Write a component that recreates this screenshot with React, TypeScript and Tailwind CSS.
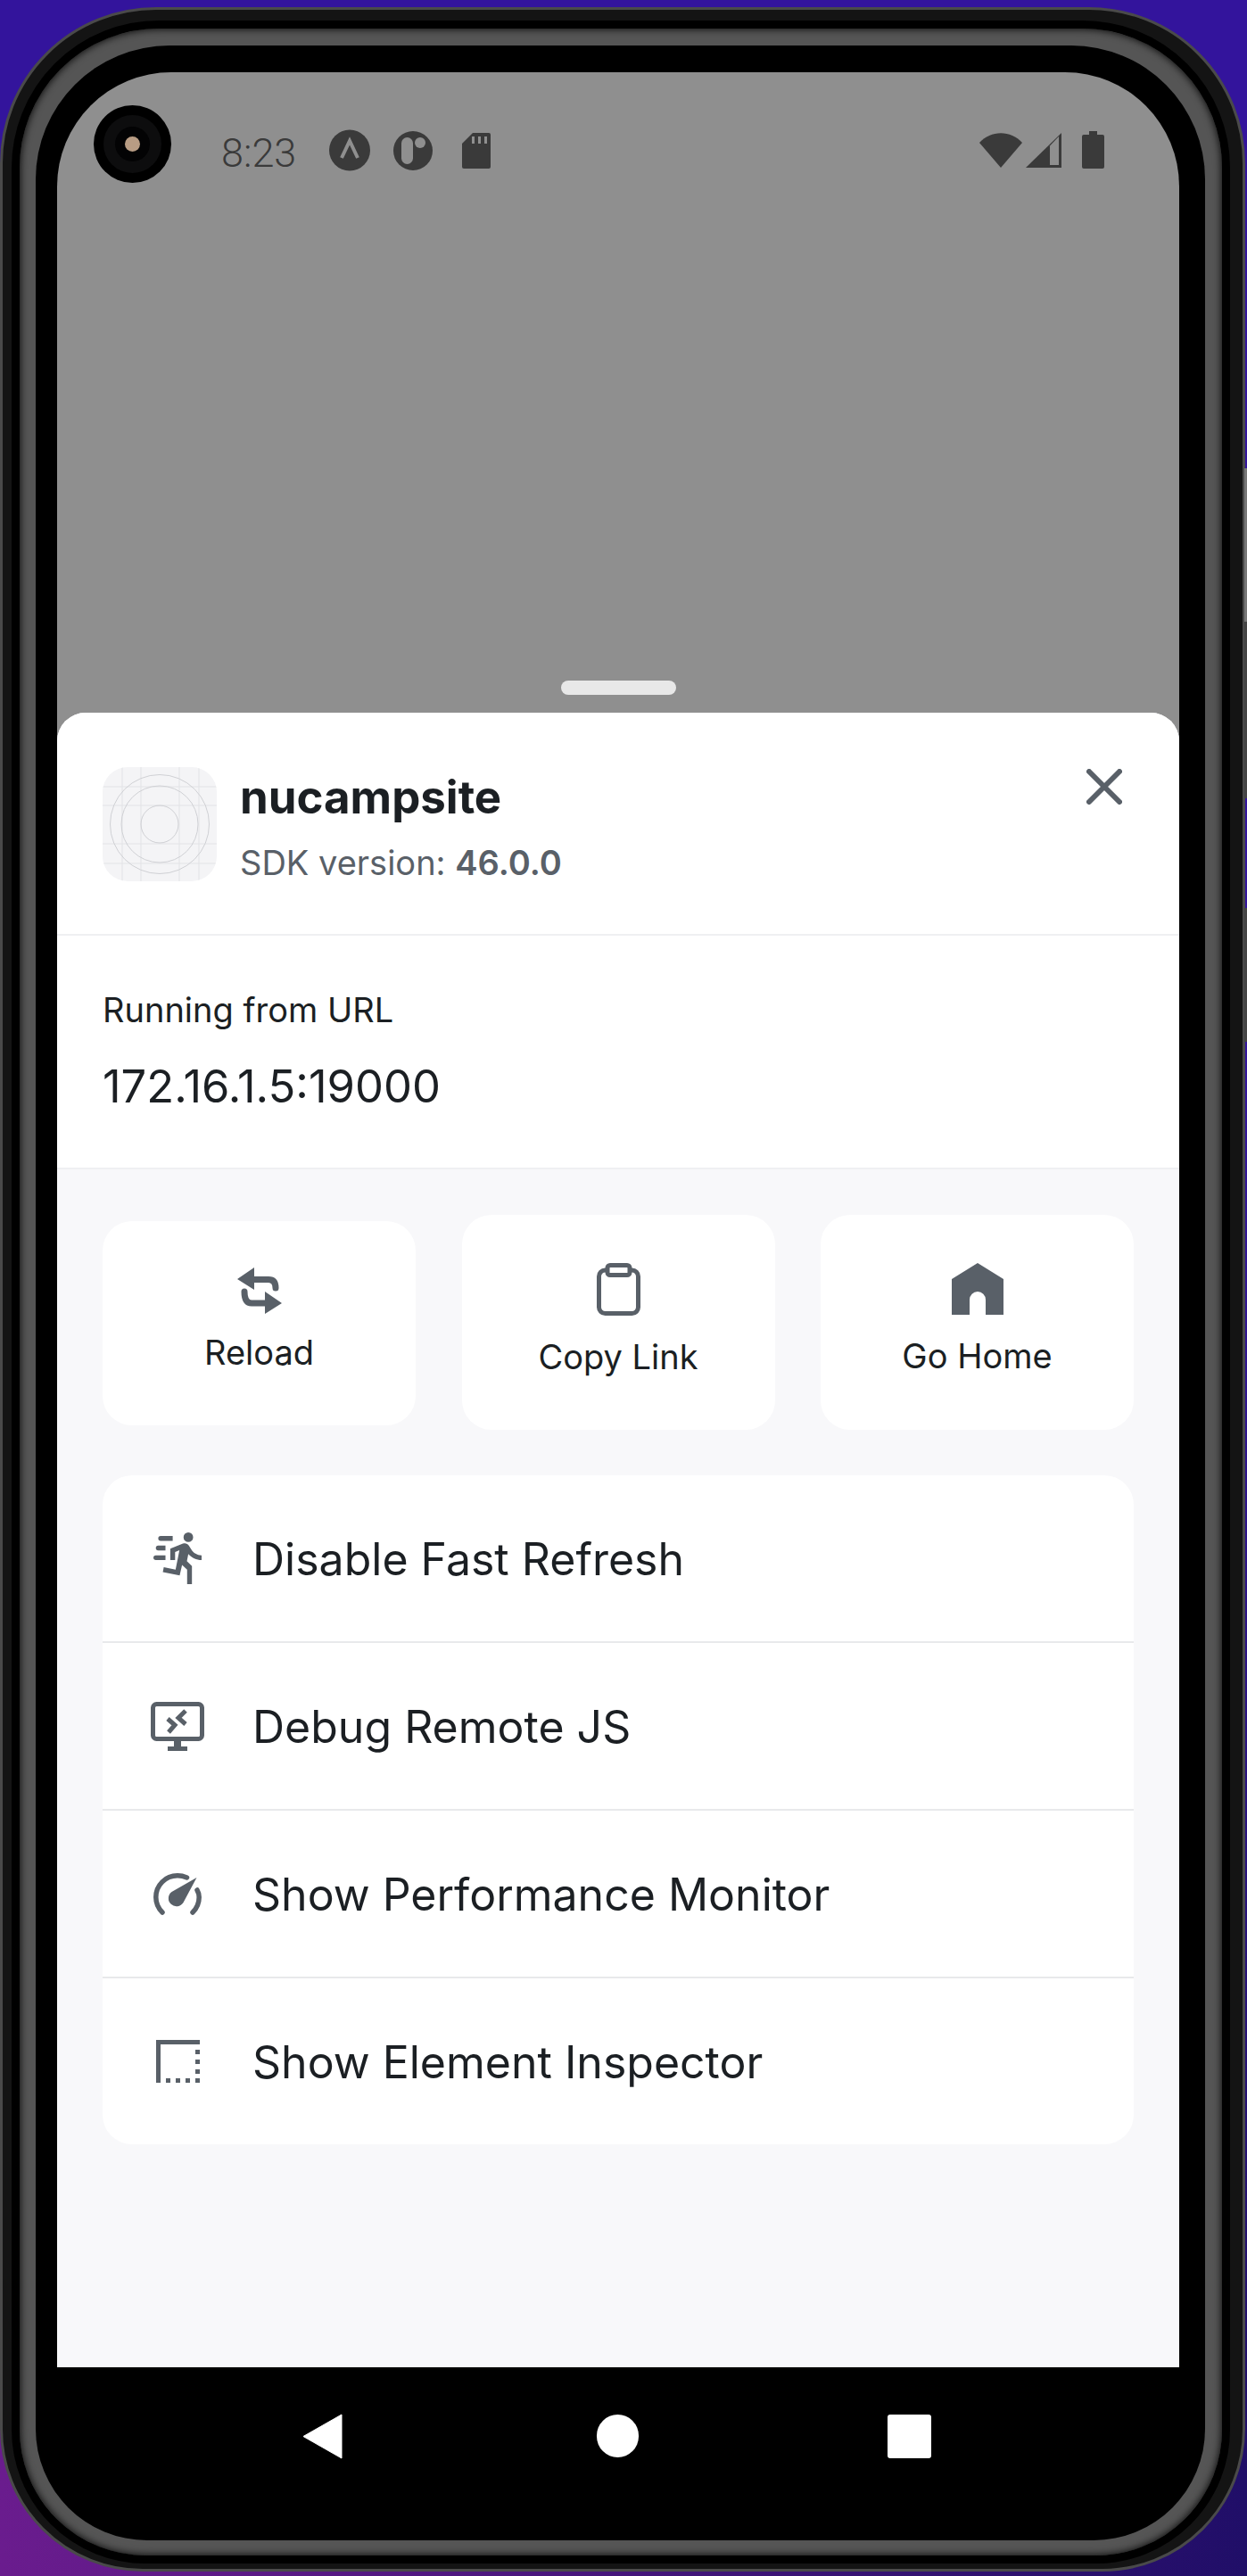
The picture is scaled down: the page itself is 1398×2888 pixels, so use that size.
import type { FC, ReactNode } from "react";

const iconColor = "#596068";

const RunFast: FC = () => (
  <svg viewBox="2 1.5 20 21.5" className="h-[58px] w-[54px]" fill={iconColor}>
    <path d="M16.5,5.5A2,2 0 0,0 18.5,3.5A2,2 0 0,0 16.5,1.5A2,2 0 0,0 14.5,3.5A2,2 0 0,0 16.5,5.5M12.9,19.4L13.9,15L16,17V23H18V15.5L15.9,13.5L16.5,10.5C17.89,12.09 19.89,13 22,13V11C20.24,11.03 18.6,10.09 17.7,8.55L16.7,6.95C16.35,6.35 15.7,6 15,6C14.75,6 14.5,6.07 14.25,6.15L9,8.3V13H11V9.65L12.8,8.95L11.2,17L6.3,16L5.9,18L12.9,19.4M4,9A1,1 0 0,1 3,8A1,1 0 0,1 4,7H7V9H4M5,5A1,1 0 0,1 4,4A1,1 0 0,1 5,3H10V5H5M3,13A1,1 0 0,1 2,12A1,1 0 0,1 3,11H7V13H3Z" />
  </svg>
);

const RemoteDesktop: FC = () => (
  <svg viewBox="0 0 60 55" className="h-[55px] w-[60px]" fill="none">
    <rect x="2.500" y="2.500" width="55" height="39" rx="4" stroke={iconColor} strokeWidth="5" />
    <path d="M26 43h8v8h-8zM19 50h22v5H19z" fill={iconColor} />
    <path d="M39 10L31 18L39 25M19 19L27 26L20 34" stroke={iconColor} strokeWidth="5" />
  </svg>
);

const Gauge: FC = () => (
  <svg viewBox="0 0 54 47" className="h-[47px] w-[54px]" fill="none">
    <path d="M10 44C5.500 39.500 2.800 33.500 2.800 27C2.800 13.500 13.500 2.800 27 2.800C30.500 2.800 34 3.500 37.500 5" stroke={iconColor} strokeWidth="5.500" strokeLinecap="round" />
    <path d="M44 44C48.500 39.500 51.200 33.500 51.200 27C51.200 24.500 50.500 21.500 49 19" stroke={iconColor} strokeWidth="5.500" strokeLinecap="round" />
    <path d="M48.500 5L33.500 33A9 9 0 1 1 20.500 21Z" fill={iconColor} />
  </svg>
);

const InspectorBox: FC = () => (
  <svg viewBox="0 0 49 48" className="h-[48px] w-[49px]" fill={iconColor}>
    <path d="M0 0H49V5H5V48H0Z" />
    <rect x="44" y="11" width="5" height="5" />
    <rect x="44" y="22" width="5" height="5" />
    <rect x="44" y="33" width="5" height="5" />
    <rect x="44" y="43" width="5" height="5" />
    <rect x="11" y="43" width="5" height="5" />
    <rect x="22" y="43" width="5" height="5" />
    <rect x="33" y="43" width="5" height="5" />
  </svg>
);

const rows = [
  { label: "Disable Fast Refresh", icon: <RunFast /> },
  { label: "Debug Remote JS", icon: <RemoteDesktop /> },
  { label: "Show Performance Monitor", icon: <Gauge /> },
  { label: "Show Element Inspector", icon: <InspectorBox /> },
];

const AppIcon: FC = () => (
  <svg viewBox="0 0 128 128" className="h-[128px] w-[128px] rounded-[28px] bg-[#f4f4f6]" fill="none" strokeWidth="1">
    <path d="M22 0V128M43 0V128M86 0V128M108 0V128M0 22H128M0 43H128M0 86H128M0 108H128" stroke="#e2e3e6" />
    <circle cx="64" cy="64" r="55.500" stroke="#cfd0d4" />
    <circle cx="64" cy="64" r="43" stroke="#cfd0d4" />
    <circle cx="64" cy="64" r="21" stroke="#cfd0d4" />
  </svg>
);

const ActionButton: FC<{ label: string; small?: boolean; icon: ReactNode }> = ({ label, small, icon }) => (
  <div
    className={
      small
        ? "flex h-[229px] w-[351px] flex-col items-center rounded-[33px] bg-white pt-[52px]"
        : "flex h-[241px] w-[351px] flex-col items-center rounded-[33px] bg-white pt-[54px]"
    }
  >
    {icon}
    <span className={small ? "mt-[19px] text-[38px] leading-[48px] text-[#1b1f23]" : "mt-[22px] text-[38px] leading-[48px] text-[#1b1f23]"}>
      {label}
    </span>
  </div>
);

const StatusBar: FC = () => (
  <div className="flex h-[124px] items-start pl-[41px] pr-[84px] pt-[37px]">
    <div className="relative h-[87px] w-[87px] rounded-full bg-black">
      <div className="absolute inset-[11px] rounded-full bg-[#0d0d0e]" />
      <div className="absolute inset-[24px] rounded-full bg-[#030304]" />
      <div className="absolute left-[35px] top-[35px] h-[17px] w-[17px] rounded-full bg-[#b89c84]" />
    </div>
    <span className="ml-[56px] mt-[28px] text-[45px] font-light leading-[52px] text-[#3a3a3a] font-['Roboto',sans-serif]">8:23</span>
    <svg viewBox="0 0 46 47" className="ml-[37px] mt-[27px] h-[47px] w-[46px]">
      <circle cx="23" cy="23.500" r="23" fill="#3a3a3a" />
      <path d="M14 32L23 13L32 32" fill="none" stroke="#8f8f8f" strokeWidth="4" />
    </svg>
    <svg viewBox="0 0 44 44" className="ml-[26px] mt-[29px] h-[44px] w-[44px]">
      <circle cx="22" cy="22" r="22" fill="#3a3a3a" />
      <rect x="9" y="7" width="13" height="30" rx="6.500" fill="#8f8f8f" />
      <circle cx="30" cy="13" r="6" fill="#8f8f8f" />
    </svg>
    <svg viewBox="0 0 32 40" className="ml-[33px] mt-[31px] h-[40px] w-[32px]">
      <path d="M12 0H30A2 2 0 0 1 32 2V38A2 2 0 0 1 30 40H2A2 2 0 0 1 0 38V12Z" fill="#3a3a3a" />
      <path d="M11 4h3v8h-3zM18 4h3v8h-3zM25 4h3v8h-3z" fill="#8f8f8f" />
    </svg>
    <div className="flex-1" />
    <svg viewBox="0 0 48 39" className="mt-[31px] h-[39px] w-[48px]">
      <path d="M0 11C13 -3.500 35 -3.500 48 11L24 39Z" fill="#3a3a3a" />
    </svg>
    <svg viewBox="0 0 40 39" className="ml-[4px] mt-[31px] h-[39px] w-[40px]">
      <path d="M40 0V39H0Z" fill="#3a3a3a" />
      <path d="M27 14.500L37 4V36H27Z" fill="#8f8f8f" />
    </svg>
    <svg viewBox="0 0 25 42" className="ml-[23px] mt-[29px] h-[42px] w-[25px]">
      <path d="M8 0H17V4H23A2 2 0 0 1 25 6V40A2 2 0 0 1 23 42H2A2 2 0 0 1 0 40V6A2 2 0 0 1 2 4H8Z" fill="#3a3a3a" />
    </svg>
  </div>
);

export default function App() {
  return (
    <div className="h-[2888px] w-[1398px] overflow-hidden bg-[linear-gradient(to_bottom,#33149c_0%,#33149c_40%,transparent_92%),linear-gradient(to_right,#6a1c8e_0%,#200e68_100%)] font-['Inter',sans-serif]">
      {/* phone body, bands going inward */}
      <div className="mt-[8px] h-[2875px] w-[1396px] rounded-t-[175px] rounded-b-[160px] border-[3px] border-[#4a4a4a] bg-[#141414] pb-[6px] pl-[10px] pr-[14px] pt-[12px]">
        <div className="h-full w-full rounded-t-[165px] rounded-b-[150px] border-[9px] border-black bg-[#555] pb-[17px] pl-[18px] pr-[19px] pt-[19px] shadow-[inset_0_0_10px_#000]">
          <div className="h-full w-full overflow-hidden rounded-t-[150px] rounded-b-[125px] bg-black pl-[24px] pr-[29px] pt-[30px]">
            <div className="flex h-[2572px] flex-col overflow-hidden rounded-t-[128px] bg-[#8f8f8f]">
              <StatusBar />
              <div className="flex h-[593px] justify-center pt-[558px]">
                <div className="h-[16px] w-[129px] shrink-0 rounded-full bg-[#e8e8e8]" />
              </div>
            </div>
          </div>
        </div>
      </div>

      {/* developer menu sheet sits over the device screen */}
      <div className="absolute left-[64px] top-[799px] flex h-[1855px] w-[1258px] flex-col overflow-hidden rounded-t-[32px] bg-[#f8f8fa]">
        <div className="flex h-[250px] border-b-2 border-[#eff0f2] bg-white pl-[51px] pr-[64px] pt-[61px]">
          <AppIcon />
          <div className="ml-[26px] flex-1">
            <div className="mt-[4px] text-[51px] font-bold leading-[60px] text-[#1b1f23]">nucampsite</div>
            <div className="mt-[19px] text-[38px] leading-[48px] text-[#596068]">
              SDK version: <span className="font-semibold">46.0.0</span>
            </div>
          </div>
          <svg viewBox="0 0 40 40" className="mt-[2px] h-[40px] w-[40px]" fill="none" stroke={iconColor} strokeWidth="6" strokeLinecap="round">
            <path d="M3 3L37 37M37 3L3 37" />
          </svg>
        </div>
        <div className="flex h-[262px] flex-col border-b-2 border-[#eff0f2] bg-white pl-[51px] pt-[59px]">
          <span className="text-[38px] leading-[48px] text-[#1b1f23]">Running from URL</span>
          <span className="mt-[31px] text-[50.7px] leading-[62px] text-[#1b1f23]">172.16.1.5:19000</span>
        </div>
        <div className="flex items-start justify-between px-[51px] pt-[51px]">
          <div className="pt-[7px]">
            <ActionButton
              small
              label="Reload"
              icon={
                <svg viewBox="16 10 50 52" className="h-[52px] w-[50px]" fill="none">
                  <path d="M35 10L16 23L35 35Z M47 37L66 50L47 62Z" fill={iconColor} />
                  <path d="M33 23.500H51Q59 23.500 59 33M24 37Q24 50 32 50H49" stroke={iconColor} strokeWidth="7" strokeLinecap="round" />
                </svg>
              }
            />
          </div>
          <ActionButton
            label="Copy Link"
            icon={
              <svg viewBox="0 0 49 59" className="h-[59px] w-[49px]" fill="none">
                <rect x="2.500" y="8" width="44" height="48.500" rx="7" stroke={iconColor} strokeWidth="5" />
                <rect x="12" y="2.500" width="25" height="11" rx="3" fill="#fff" stroke={iconColor} strokeWidth="5" />
              </svg>
            }
          />
          <ActionButton
            label="Go Home"
            icon={
              <svg viewBox="0 0 58 58" className="h-[58px] w-[58px]" fill={iconColor}>
                <path d="M29 0L58 18V58H38V41A9 9 0 0 0 20 41V58H0V18Z" />
              </svg>
            }
          />
        </div>
        <div className="mx-[51px] mt-[51px] flex flex-col overflow-hidden rounded-[33px] bg-white">
          {rows.map((row, i) => (
            <div
              key={row.label}
              className={
                i < rows.length - 1
                  ? "flex h-[188px] items-center border-b-2 border-[#e8e9eb]"
                  : "flex h-[186px] items-center"
              }
            >
              <div className="flex w-[168px] shrink-0 justify-center">{row.icon}</div>
              <span className="pt-[2px] text-[50px] leading-[62px] text-[#1b1f23]">{row.label}</span>
            </div>
          ))}
        </div>
      </div>

      {/* navigation bar */}
      <div className="absolute left-[64px] top-[2654px] h-[103px] w-[1258px]">
        <svg viewBox="0 0 45 51" className="absolute left-[275px] top-[52px] h-[51px] w-[45px]" fill="#fff" stroke="#fff" strokeLinejoin="round">
          <path d="M44 1V50L1 25.500Z" />
        </svg>
        <div className="absolute left-[605px] top-[53px] h-[48px] w-[47px] rounded-full bg-white" />
        <div className="absolute left-[931px] top-[53px] h-[49px] w-[49px] rounded-[3px] bg-white" />
      </div>

      {/* side buttons */}
      <div className="absolute left-[1395px] top-[525px] h-[172px] w-[3px] bg-[#777]" />
      <div className="absolute left-[1395px] top-[697px] h-[198px] w-[3px] bg-[#444]" />
      <div className="absolute left-[1395px] top-[1018px] h-[150px] w-[3px] bg-[#444]" />
    </div>
  );
}
